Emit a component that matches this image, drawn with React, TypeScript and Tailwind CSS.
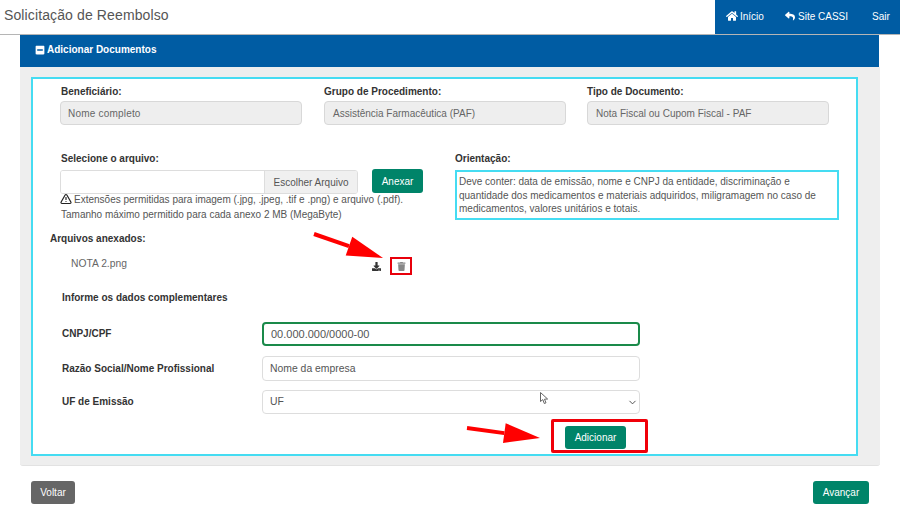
import { FaHome, FaReply, FaMinusSquare, FaDownload, FaTrash } from 'react-icons/fa';
import { TriangleAlert, ChevronDown } from 'lucide-react';

const labelCls = 'block text-[10px] leading-[14px] font-bold text-[#333]';
const readonlyCls = 'mt-[2px] h-[24px] flex items-center px-[8px] text-[10px] text-[#666] bg-[#eeeeee] border border-[#d8d8d8] rounded-[4px]';
const inputCls = 'block w-[378px] px-[7px] text-[#555] bg-white rounded-[4px] outline-none';

function Arrow({ className, x2, y2, x1, y1 }: { className: string; x1: number; y1: number; x2: number; y2: number }) {
  // shaft plus a wide head, pointing from (x1,y1) to (x2,y2)
  const dx = x2 - x1;
  const dy = y2 - y1;
  const len = Math.hypot(dx, dy);
  const ux = dx / len;
  const uy = dy / len;
  const bx = x2 - ux * 36;
  const by = y2 - uy * 36;
  const head = `${x2},${y2} ${bx - uy * 10},${by + ux * 10} ${bx + uy * 10},${by - ux * 10}`;
  return (
    <svg className={className} width="900" height="512" viewBox="0 0 900 512">
      <line x1={x1} y1={y1} x2={bx} y2={by} stroke="#ff0000" strokeWidth="4" />
      <polygon points={head} fill="#ff0000" />
    </svg>
  );
}

export default function App() {
  return (
    <div className="relative w-[900px] h-[512px] overflow-hidden bg-white font-['Liberation_Sans',Arial,sans-serif]">
      {/* top bar */}
      <div className="flex h-[35px] border-b border-[#b5b5b5]">
        <div className="flex-1 pl-[4px] pt-[6px] text-[14px] leading-[18px] tracking-[0.12px] text-[#555]">Solicitação de Reembolso</div>
        <div className="flex w-[185px] items-center bg-[#005ca3] text-[10px] text-white pl-[11px] pb-[2px]">
          <span className="flex items-center gap-[2px] w-[59px]"><FaHome size={12} />Início</span>
          <span className="flex items-center gap-[3px] w-[87px]"><FaReply size={10} />Site CASSI</span>
          <span>Sair</span>
        </div>
      </div>

      {/* panel */}
      <div className="ml-[20px] mr-[20px] w-[860px]">
        <div className="h-[32px] w-[859px] bg-[#005ca3] flex items-center pl-[15px] pb-[3px] gap-[2px] text-[10px] font-bold text-white">
          <FaMinusSquare size={10} />Adicionar Documentos
        </div>
        <div className="h-[399px] bg-[#eeeeee] rounded-b-[3px] border-b border-[#e2e2e2] pl-[11px] pr-[22px] pt-[10px]">
          <div className="h-[379px] border-[2px] border-solid border-[#45dcf2] bg-white pt-[6px]">
            <div className="flex pl-[27px] gap-[22px]">
              <div className="w-[242px]">
                <span className={`${labelCls} pl-[1px]`}>Beneficiário:</span>
                <div className={`${readonlyCls} !px-[7px] tracking-[0.2px]`}>Nome completo</div>
              </div>
              <div className="w-[242px]">
                <span className={labelCls}>Grupo de Procedimento:</span>
                <div className={readonlyCls}>Assistência Farmacêutica (PAF)</div>
              </div>
              <div className="w-[242px] -ml-[1px]">
                <span className={labelCls}>Tipo de Documento:</span>
                <div className={readonlyCls}>Nota Fiscal ou Cupom Fiscal - PAF</div>
              </div>
            </div>

            <div className="flex mt-[27px] pl-[27px]">
              <div className="w-[395px]">
                <span className={`${labelCls} pl-[1px]`}>Selecione o arquivo:</span>
                <div className="flex items-start mt-[4px]">
                  <div className="flex w-[298px] h-[24px] border border-[#dddddd] rounded-[3px] overflow-hidden">
                    <div className="flex-1 bg-white" />
                    <div className="w-[93px] flex items-center justify-center bg-[#f0f0f0] border-l border-[#dddddd] text-[10px] text-[#555]">Escolher Arquivo</div>
                  </div>
                  <button className="ml-[14px] -mt-[1px] w-[51px] h-[24px] rounded-[3px] bg-[#008469] text-[10px] text-white">Anexar</button>
                </div>
                <p className="-mt-[1px] pl-[1px] w-[380px] text-[10px] leading-[14.5px] text-[#555]">
                  <TriangleAlert size={12} strokeWidth={2.4} className="inline -ml-[1px] -mt-[2px] mr-[2px] text-[#222]" />
                  Extensões permitidas para imagem (.jpg, .jpeg, .tif e .png) e arquivo (.pdf).<br />Tamanho máximo permitido para cada anexo 2 MB (MegaByte)
                </p>
              </div>
              <div className="w-[384px]">
                <span className={labelCls}>Orientação:</span>
                <div className="mt-[4px] h-[50px] border-[2px] border-[#45dcf2] pl-[2px] pr-[1px] pt-[3px] text-[10px] leading-[13.5px] text-[#555]">
                  Deve conter: data de emissão, nome e CNPJ da entidade, discriminação e quantidade dos medicamentos e materiais adquiridos, miligramagem no caso de medicamentos, valores unitários e totais.
                </div>
              </div>
            </div>

            <div className="mt-[10px] pl-[17px]">
              <span className={labelCls}>Arquivos anexados:</span>
              <div className="flex items-start mt-[11px] pl-[21px]">
                <span className="w-[300px] text-[10.3px] leading-[14px] text-[#666]">NOTA 2.png</span>
                <span className="flex items-start">
                  <FaDownload size={9} className="ml-[1px] mt-[5px] text-[#333]" />
                  <span className="ml-[9px] w-[22px] h-[18px] border-[2px] border-[#e8000b] flex items-center justify-center">
                    <FaTrash size={9} className="text-[#888]" />
                  </span>
                </span>
              </div>
            </div>

            <div className={`${labelCls} mt-[16px] ml-[29px]`}>Informe os dados complementares</div>

            <div className="mt-[17px] pl-[29px] flex flex-col">
              <div className="flex items-center">
                <label className={`${labelCls} w-[200px]`}>CNPJ/CPF</label>
                <input readOnly value="00.000.000/0000-00" className={`${inputCls} h-[24px] text-[11px] border-[2px] border-[#1a8a4a]`} />
              </div>
              <div className="flex items-center mt-[10px]">
                <label className={`${labelCls} w-[200px]`}>Razão Social/Nome Profissional</label>
                <input readOnly value="Nome da empresa" className={`${inputCls} h-[25px] text-[10.4px] border border-[#dddddd]`} />
              </div>
              <div className="flex items-center mt-[9px]">
                <label className={`${labelCls} w-[200px] pb-[1px]`}>UF de Emissão</label>
                <div className="relative">
                  <select className={`${inputCls} h-[24px] appearance-none text-[10.4px] border border-[#dddddd]`} defaultValue="UF"><option>UF</option></select>
                  <ChevronDown size={11} strokeWidth={2} className="absolute right-[2px] top-[7px] text-[#444] pointer-events-none" />
                </div>
              </div>
            </div>

            <div className="flex justify-end mr-[208px] mt-[5px]">
              <div className="w-[97px] h-[34px] border-[3px] border-[#f00009] rounded-[2px] pl-[11px] pt-[2px]">
                <button className="w-[61px] h-[23px] rounded-[3px] bg-[#008469] text-[10px] text-white">Adicionar</button>
              </div>
            </div>
          </div>
        </div>
      </div>

      {/* footer buttons */}
      <div className="flex justify-between pl-[31px] pr-[31px] mt-[15px]">
        <button className="w-[44px] h-[23px] rounded-[3px] bg-[#666666] text-[10px] text-white">Voltar</button>
        <button className="w-[56px] h-[23px] rounded-[3px] bg-[#008469] text-[10px] text-white">Avançar</button>
      </div>

      {/* annotations */}
      <Arrow className="absolute left-0 top-0 pointer-events-none" x1={314} y1={234} x2={383} y2={258} />
      <Arrow className="absolute left-0 top-0 pointer-events-none" x1={467} y1={428} x2={540} y2={438} />
      <svg className="absolute left-[540px] top-[392px]" width="10" height="13" viewBox="0 0 10 13">
        <path d="M0.5 0.5 L0.5 9.5 L2.8 7.6 L4.3 11.5 L6 10.8 L4.5 7.2 L7.6 7 Z" fill="#fff" stroke="#555" strokeWidth="0.9" />
      </svg>
    </div>
  );
}
